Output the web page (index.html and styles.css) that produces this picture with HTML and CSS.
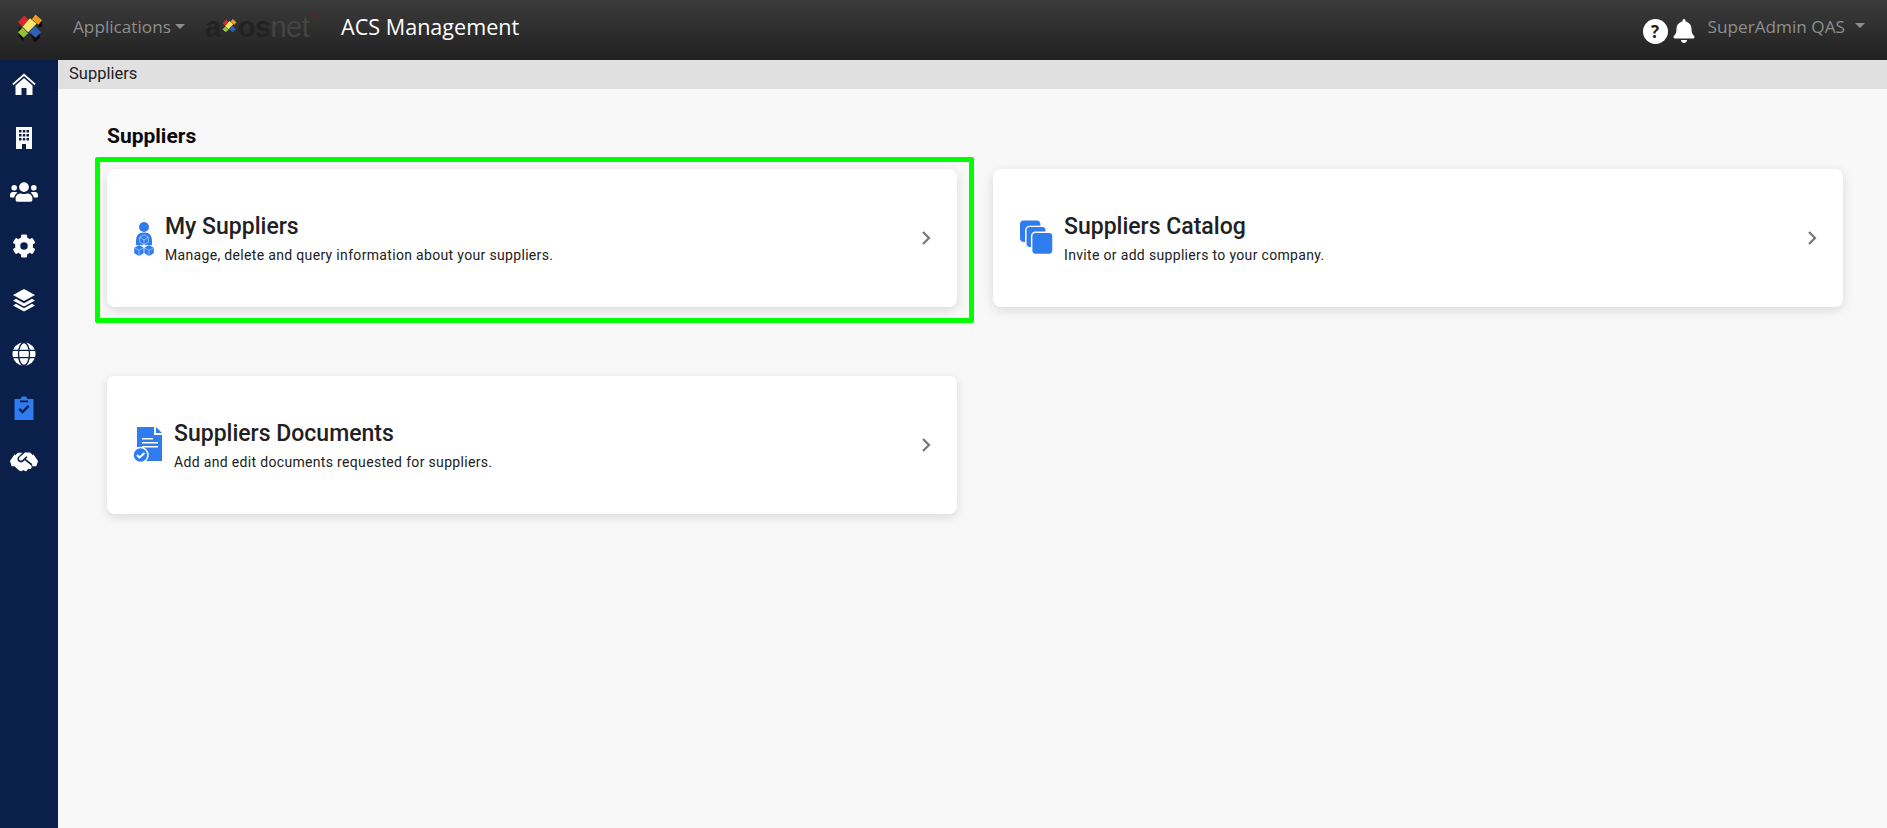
FILE: index.html
```html
<!DOCTYPE html>
<html lang="en">

<head>
    <meta charset="UTF-8">
    <title>ACS Management</title>
    <link rel="stylesheet" href="styles.css">
</head>

<body>
    <header class="topbar">
        <svg class="logo" viewBox="0 0 28 30">
            <path fill="#0c0c0c" d="M2 13l6 6-1 10-5-6zM14 21l5 9 6-5-1-6-5-2zM21 3l6 5v5l-4 1z" />
            <path fill="#d8262c" d="M8 1l5 5-7 7-5-5z" />
            <path fill="#f09a1f" d="M20 0l7 6-4 5-7-6z" />
            <path fill="#f6e86a" d="M14 4l7 6-9 9-6-6z" />
            <path fill="#8fc03c" d="M6 14l6 6-5 5-6-6z" />
            <path fill="#2f5fae" d="M19 12l7 7-6 6-7-6z" />
        </svg>
        <a class="apps caret">Applications</a>
        <div class="brand">
            <span class="dark">a</span><svg class="brand-x" viewBox="0 0 28 30">
                <path fill="#d8262c" d="M8 1l5 5-7 7-5-5z" />
                <path fill="#f09a1f" d="M20 0l7 6-4 5-7-6z" />
                <path fill="#f6e86a" d="M14 4l7 6-9 9-6-6z" />
                <path fill="#8fc03c" d="M6 14l6 6-5 5-6-6z" />
                <path fill="#2f5fae" d="M19 12l7 7-6 6-7-6z" />
            </svg><span class="dark">os</span><span class="light">net</span><span class="mark">SM</span>
        </div>
        <div class="app-title">ACS Management</div>
        <div class="top-right">
            <span class="help">?</span>
            <svg class="bell" viewBox="0 0 448 512">
                <path fill="#fff" d="M224 512c35 0 64-29 64-64H160c0 35 29 64 64 64zm215-150c-19-21-55-52-55-154 0-78-54-140-128-155V32a32 32 0 0 0-64 0v21C118 68 64 130 64 208c0 102-36 133-55 154-6 6-9 14-9 22 0 16 13 32 32 32h384c19 0 32-16 32-32 0-8-3-16-9-22z" />
            </svg>
            <a class="user caret">SuperAdmin QAS</a>
        </div>
    </header>

    <div class="main">
        <nav class="sidebar">
            <svg class="nav-icon" viewBox="0 0 24 24">
                <path d="M12 1.500L0.300 11.800l1.200 1.400L12 4l10.500 9.200 1.200-1.400z" />
                <path d="M12 6L3.500 13.400V23h6v-7h5v7h6v-9.600z" />
            </svg>
            <svg class="nav-icon" viewBox="0 0 24 24">
                <path fill-rule="evenodd" d="M4 1h16v22h-6v-5h-4v5H4zM7 4v2.500h2.500V4zm3.800 0v2.500h2.500V4zm3.700 0v2.500H17V4zM7 8v2.500h2.500V8zm3.800 0v2.500h2.500V8zm3.700 0v2.500H17V8zM7 12v2.500h2.500V12zm3.800 0v2.500h2.500V12zm3.700 0v2.500H17V12z" />
            </svg>
            <svg class="nav-icon wide" viewBox="0 0 640 512">
                <path d="M96 224a64 64 0 1 0 0-128 64 64 0 0 0 0 128zm448 0a64 64 0 1 0 0-128 64 64 0 0 0 0 128zm32 32h-64c-18 0-34 7-45 19 40 22 69 62 75 109h66c18 0 32-14 32-32v-32c0-35-29-64-64-64zm-256 0a112 112 0 1 0 0-224 112 112 0 0 0 0 224zm77 32h-8c-21 10-44 16-69 16s-48-6-69-16h-8c-64 0-115 52-115 115v29c0 26 21 48 48 48h288c27 0 48-22 48-48v-29c0-63-52-115-115-115zM173 275c-11-12-27-19-45-19H64c-35 0-64 29-64 64v32c0 18 14 32 32 32h66c6-47 35-87 75-109z" />
            </svg>
            <svg class="nav-icon" viewBox="0 0 512 512">
                <path d="M487 316l-42-25a192 192 0 0 0 0-70l42-25c5-3 7-9 5-14-11-35-30-67-54-93-4-4-10-5-15-2l-43 24c-17-15-37-26-58-34V28c0-6-4-11-9-12-37-8-75-8-110 0-5 1-9 6-9 12v49c-21 8-41 19-58 34L93 87c-5-3-11-2-15 2-24 26-43 58-54 93-2 5 0 11 5 14l42 25a192 192 0 0 0 0 70l-42 25c-5 3-7 9-5 14 11 35 30 67 54 93 4 4 10 5 15 2l43-24c17 15 37 26 58 34v49c0 6 4 11 9 12 37 8 75 8 110 0 5-1 9-6 9-12v-49c21-8 41-19 58-34l43 24c5 3 11 2 15-2 24-26 43-58 54-93 2-5 0-11-5-14zM256 336a80 80 0 1 1 0-160 80 80 0 0 1 0 160z" />
            </svg>
            <svg class="nav-icon" viewBox="0 0 24 24">
                <path d="M12 1l11 6-11 6L1 7z" />
                <path d="M4 10.800l8 4.400 8-4.400 3 1.700-11 6-11-6z" />
                <path d="M4 15.800l8 4.400 8-4.400 3 1.700-11 6-11-6z" />
            </svg>
            <svg class="nav-icon" viewBox="0 0 24 24">
                <circle cx="12" cy="12" r="11.500" />
                <g class="globe-lines">
                    <ellipse cx="12" cy="12" rx="5.500" ry="11.500" />
                    <path d="M1 8.300h22M1 15.700h22" />
                </g>
            </svg>
            <svg class="nav-icon active" viewBox="0 0 24 24">
                <path fill-rule="evenodd" d="M2.500 3H8.500l1.500-2.500h4L15.500 3h6v21h-19zM8 4.500v1.700h8V4.500zM10.500 17.800l-4-4 1.700-1.700 2.300 2.300 5.300-5.300 1.700 1.700z" />
            </svg>
            <svg class="nav-icon wide" viewBox="30 50 580 420">
                <path d="M434.700 64h-85.900c-8 0-15.700 3-21.600 8.400l-98.300 90c-.1.100-.2.300-.3.400-16.600 15.600-16.300 40.500-2.100 56 12.700 13.900 39.400 17.600 56.100 2.700.1-.1.300-.1.400-.2l79.900-73.200c6.500-5.900 16.700-5.500 22.600 1 6 6.500 5.500 16.600-1 22.600l-26.100 23.900L504 313.800c2.900 2.400 5.500 5 7.900 7.700V128l-54.600-54.600c-5.900-6-14.100-9.400-22.600-9.400zM483.800 343.300L334.600 222.200l-30 27.500c-29.700 27.100-75.200 24.500-101.700-4.400-26.900-29.400-24.800-74.900 4.400-101.700L289.100 68h-83.800c-8.500 0-16.600 3.400-22.600 9.400L128 132v220l91.500 82.800c27.800 22.600 68.500 18.400 91.100-9.300l.2-.2 18.100 15.700c16.100 13.100 39.700 10.700 52.800-5.400l31.400-38.600 5.400 4.400c13.700 11.100 33.900 9.100 45-4.700l9.500-11.700c11.200-13.800 9.100-33.900-4.600-45z" />
                <path d="M30 240L125 100l25 30v220l-85 0zM610 240L515 100l-25 30v220l85 0z" />
            </svg>
        </nav>

        <div class="content">
            <div class="crumb">Suppliers</div>
            <div class="page">
                <h1 class="page-title">Suppliers</h1>
                <div class="cards">
                    <a class="card">
                        <span class="highlight"></span>
                        <svg class="card-icon ic-person" viewBox="0 0 20 34">
                            <circle cx="10" cy="5" r="5" />
                            <path d="M2 23C1.500 15 3 10.500 10 10.500S18.500 15 18 23z" />
                            <path d="M5 23l4.800 2.700v5.600L5 34 .2 31.300v-5.600z" />
                            <path d="M15 23l4.800 2.700v5.600L15 34l-4.800-2.700v-5.600z" />
                            <g class="cube">
                                <path d="M10 12.800l4.300 2.500v5L10 22.800l-4.300-2.500v-5zM5.700 15.300L10 17.800l4.300-2.500M10 17.800v5" />
                                <path d="M.2 25.700L5 28.400l4.800-2.700M5 28.400V34M10.200 25.700l4.800 2.700 4.800-2.700M15 28.400V34M10 25v7" />
                            </g>
                        </svg>
                        <span class="card-text">
                            <span class="card-title">My Suppliers</span>
                            <span class="card-desc">Manage, delete and query information about your suppliers.</span>
                        </span>
                        <svg class="chev" viewBox="0 0 10 16"><path d="M2 2l6 6-6 6" /></svg>
                    </a>
                    <a class="card">
                        <svg class="card-icon ic-stack" viewBox="0 0 34 36">
                            <rect x="0" y="0" width="21" height="22" rx="4" />
                            <rect x="6" y="6" width="21" height="22" rx="4" stroke="#fff" stroke-width="1.500" />
                            <rect x="12" y="12" width="22" height="23" rx="4" stroke="#fff" stroke-width="1.500" />
                        </svg>
                        <span class="card-text">
                            <span class="card-title">Suppliers Catalog</span>
                            <span class="card-desc">Invite or add suppliers to your company.</span>
                        </span>
                        <svg class="chev" viewBox="0 0 10 16"><path d="M2 2l6 6-6 6" /></svg>
                    </a>
                    <a class="card">
                        <svg class="card-icon ic-doc" viewBox="0 0 30 36">
                            <path d="M4 0h17v8h8v26H4z" />
                            <path d="M23 0l6 6h-6z" />
                            <path d="M9 11h11v1.500H9zM9 15h16v1.500H9zM9 19h16v1.500H9z" fill="#fff" />
                            <circle cx="7.500" cy="28" r="7.500" stroke="#fff" stroke-width="1.500" />
                            <path d="M4 28l2.500 2.500 5-4.500" fill="none" stroke="#fff" stroke-width="2" />
                        </svg>
                        <span class="card-text">
                            <span class="card-title">Suppliers Documents</span>
                            <span class="card-desc">Add and edit documents requested for suppliers.</span>
                        </span>
                        <svg class="chev" viewBox="0 0 10 16"><path d="M2 2l6 6-6 6" /></svg>
                    </a>
                </div>
            </div>
        </div>
    </div>
</body>

</html>
```

FILE: styles.css
```css
* {
    box-sizing: border-box;
}

html,
body {
    height: 100%;
}

body {
    margin: 0;
    display: flex;
    flex-direction: column;
    font-family: Roboto, Arial, sans-serif;
    background-color: #f8f8f8;
    overflow: hidden;
}

.topbar {
    height: 60px;
    flex: none;
    display: flex;
    align-items: center;
    padding: 0 22px 7px 17px;
    background: linear-gradient(#3b3b3b, #212121);
    font-family: "Open Sans", Arial, sans-serif;
}

.logo {
    width: 26px;
    height: 29px;
    flex: none;
    margin: 4px 30px 0 0;
}

.caret {
    color: #8e8e8e;
    font-size: 17.2px;
    display: flex;
    align-items: center;
}

.caret::after {
    content: "";
    margin-left: 4px;
    border-top: 5px solid #8e8e8e;
    border-left: 5px solid transparent;
    border-right: 5px solid transparent;
}

.apps {
    width: 132px;
    flex: none;
}

.brand {
    width: 136px;
    flex: none;
    display: flex;
    align-items: center;
    font-family: "Liberation Sans", Arial, sans-serif;
    font-size: 29px;
    line-height: 30px;
    letter-spacing: -0.5px;
}

.brand-x {
    width: 15px;
    height: 20px;
    margin: 0 1px;
}

.dark {
    color: #222;
    font-weight: bold;
}

.light {
    color: #444;
}

.mark {
    align-self: flex-start;
    color: #6b2024;
    font-size: 6px;
    line-height: 8px;
    letter-spacing: 0;
}

.app-title {
    color: #fff;
    font-size: 21.6px;
}

.top-right {
    margin-left: auto;
    display: flex;
    align-items: center;
}

.help {
    width: 25px;
    height: 25px;
    margin-top: 10px;
    border-radius: 50%;
    background-color: #fff;
    color: #222;
    font-size: 17px;
    font-weight: bold;
    line-height: 25px;
    text-align: center;
}

.bell {
    width: 22px;
    height: 24px;
    margin: 9px 0 0 5px;
}

.user {
    margin-left: 13px;
    margin-top: -1px;
}

.user::after {
    margin-left: 10px;
    margin-top: -2px;
}

.main {
    flex: 1;
    display: flex;
    min-height: 0;
}

.sidebar {
    width: 58px;
    flex: none;
    display: flex;
    flex-direction: column;
    align-items: center;
    padding: 12px 11px 0 0;
    gap: 30px;
    background-color: #0a1f4a;
}

.nav-icon {
    width: 24px;
    height: 24px;
    fill: #fff;
    flex: none;
}

.nav-icon.wide {
    width: 28px;
}

.nav-icon.active {
    fill: #2f7cf0;
}

.globe-lines {
    fill: none;
    stroke: #0a1f4a;
    stroke-width: 1.300;
}

.content {
    flex: 1;
    min-width: 0;
}

.crumb {
    height: 29px;
    padding-left: 11px;
    background-color: #e0e0e0;
    color: #212121;
    font-size: 16.500px;
    line-height: 27px;
}

.page {
    padding: 35px 44px 0 49px;
}

.page-title {
    margin: 0 0 21px 0;
    font-size: 21px;
    line-height: 24px;
    font-weight: 700;
    color: #0a0a0a;
}

.cards {
    display: grid;
    grid-template-columns: 1fr 1fr;
    column-gap: 36px;
    row-gap: 69px;
}

.card {
    position: relative;
    height: 138px;
    display: flex;
    align-items: center;
    padding: 0 26px 0 26px;
    border-radius: 8px;
    background-color: #fff;
    box-shadow: 0 3px 12px rgba(0, 0, 0, 0.13);
}

.highlight {
    position: absolute;
    top: -12px;
    left: -12px;
    right: -17px;
    bottom: -16px;
    border: 5px solid #00ff00;
    border-radius: 2px;
}

.card-icon {
    flex: none;
    fill: #2f7cee;
}

.cube {
    fill: none;
    stroke: #fff;
    stroke-width: 0.450;
}

.ic-person {
    width: 20px;
    height: 34px;
    margin: 2px 11px 0 1px;
}

.ic-stack {
    width: 33px;
    height: 36px;
    margin: 0 11px 0 1px;
}

.ic-doc {
    width: 30px;
    height: 36px;
    margin-right: 11px;
}

.card-text {
    flex: 1;
    display: flex;
    flex-direction: column;
    padding-top: 1px;
}

.card-title {
    color: #212121;
    font-size: 23px;
    font-weight: 500;
    line-height: 28px;
}

.card-desc {
    margin-top: 5px;
    color: #212121;
    font-size: 14px;
    line-height: 18px;
    letter-spacing: 0.33px;
}

.chev {
    width: 10px;
    height: 16px;
    fill: none;
    stroke: #777;
    stroke-width: 2.200;
}
```
